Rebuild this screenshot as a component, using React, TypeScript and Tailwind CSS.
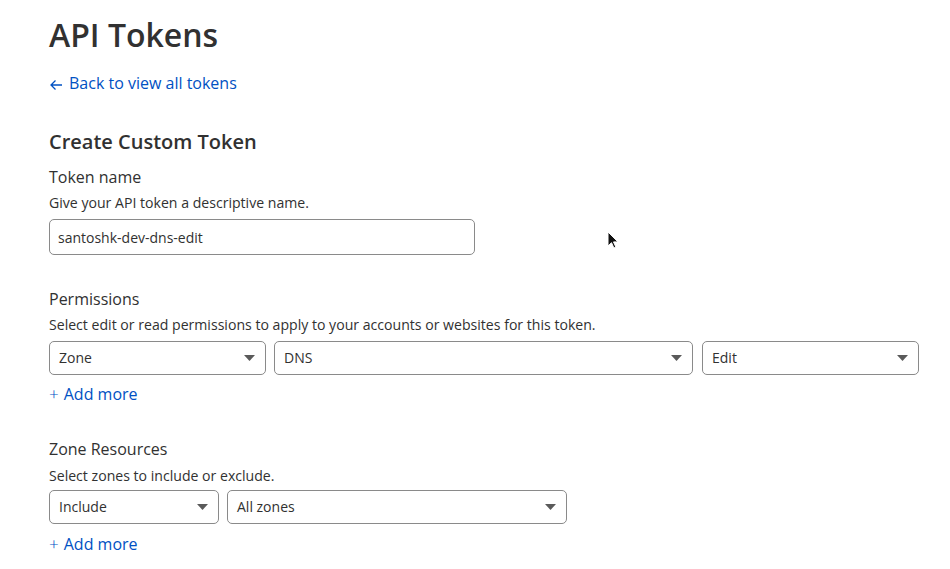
import type { ReactNode } from "react";

function Caret() {
  return (
    <svg width="11" height="6" viewBox="0 0 11 6" className="shrink-0">
      <path d="M0 0h11L5.5 6z" fill="#5a5a5a" />
    </svg>
  );
}

function SelectBox({ value, className }: { value: string; className: string }) {
  return (
    <div
      className={`flex h-[34px] items-center justify-between rounded-[5px] border border-[#8a8a8a] bg-white pl-[9px] pr-[10px] text-[14px] text-[#313131] ${className}`}
    >
      <span className="-mt-px">{value}</span>
      <Caret />
    </div>
  );
}

function AddMore({ className }: { className: string }) {
  return (
    <div className={`flex h-6 items-center text-[16px] leading-6 text-[#0051c3] ${className}`}>
      <span className="mr-[5px] text-[17px] font-light">+</span>
      <span>Add more</span>
    </div>
  );
}

function Label({ children, className }: { children: ReactNode; className: string }) {
  return <p className={`text-[16px] leading-6 text-[#313131] ${className}`}>{children}</p>;
}

function Hint({ children, className }: { children: ReactNode; className: string }) {
  return <p className={`text-[14.1px] leading-5 text-[#313131] ${className}`}>{children}</p>;
}

export default function App() {
  return (
    <div
      className="relative h-[569px] w-[950px] overflow-hidden bg-white pl-[49px] pt-[15px]"
      style={{ fontFamily: '"Open Sans", "Noto Sans", sans-serif' }}
    >
      <h1 className="text-[32px] font-semibold leading-10 text-[#313131]">API Tokens</h1>

      <div className="mt-4 flex h-6 items-center text-[16px] leading-6 text-[#0051c3]">
        <svg width="14" height="12" viewBox="0 0 14 12" className="mr-[6px] mt-[3px]">
          <path d="M13 6H2M6.5 1.5 2 6l4.5 4.5" fill="none" stroke="#0051c3" strokeWidth="1.3" />
        </svg>
        <span>Back to view all tokens</span>
      </div>

      <h2 className="mt-[33px] text-[20px] font-semibold leading-7 text-[#313131]">Create Custom Token</h2>

      <Label className="mt-[9px]">Token name</Label>
      <Hint className="mt-1">Give your API token a descriptive name.</Hint>
      <div className="mt-[6px] flex h-[36px] w-[426px] items-center rounded-[5px] border border-[#8a8a8a] pl-[8px] text-[14px] text-[#313131]">
        santoshk-dev-dns-edit
      </div>

      <Label className="mt-[32px]">Permissions</Label>
      <Hint className="mt-1">Select edit or read permissions to apply to your accounts or websites for this token.</Hint>
      <div className="mt-[6px] flex gap-[8px]">
        <SelectBox value="Zone" className="w-[217px]" />
        <SelectBox value="DNS" className="w-[419px]" />
        <SelectBox value="Edit" className="ml-px w-[217px]" />
      </div>
      <AddMore className="mt-[7px]" />

      <Label className="mt-[31px]">Zone Resources</Label>
      <Hint className="mt-[5px]">Select zones to include or exclude.</Hint>
      <div className="mt-1 flex gap-[8px]">
        <SelectBox value="Include" className="w-[170px]" />
        <SelectBox value="All zones" className="w-[340px]" />
      </div>
      <AddMore className="mt-[8px]" />

      <svg width="12" height="18" viewBox="0 0 12 18" className="absolute left-[607px] top-[231px]">
        <path d="M1 1v14l3.5-3.3 2.4 5.3 2-.9-2.4-5.2H11z" fill="#111" stroke="#fff" strokeWidth="1" />
      </svg>
    </div>
  );
}
